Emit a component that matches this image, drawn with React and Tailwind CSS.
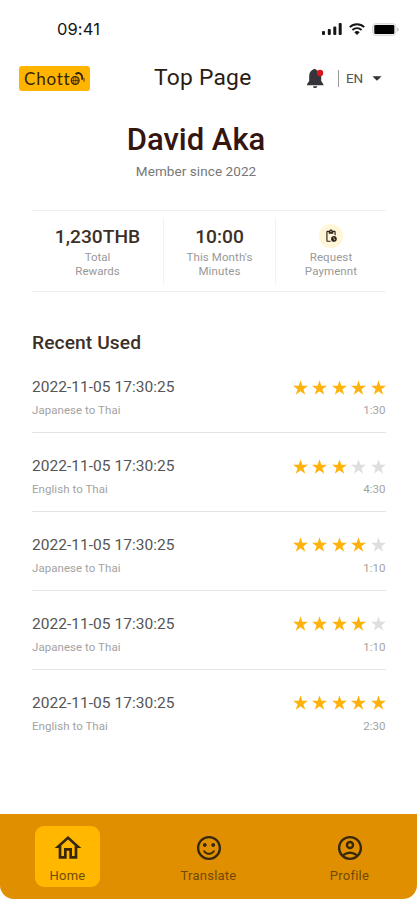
import React from "react";
import {
  MdOutlineHome,
  MdSentimentSatisfiedAlt,
  MdOutlineAccountCircle,
  MdOutlinePendingActions,
  MdArrowDropDown,
} from "react-icons/md";

const HISTORY = [
  { date: "2022-11-05 17:30:25", lang: "Japanese to Thai", stars: 5, time: "1:30" },
  { date: "2022-11-05 17:30:25", lang: "English to Thai", stars: 3, time: "4:30" },
  { date: "2022-11-05 17:30:25", lang: "Japanese to Thai", stars: 4, time: "1:10" },
  { date: "2022-11-05 17:30:25", lang: "Japanese to Thai", stars: 4, time: "1:10" },
  { date: "2022-11-05 17:30:25", lang: "English to Thai", stars: 5, time: "2:30" },
];

function StatusBar() {
  return (
    <div className="flex h-[58px] items-center pl-[57px] pr-[18px] text-[#161616]">
      <span className="font-['Inter',sans-serif] text-[16.5px] font-normal leading-5 tracking-[0.1px]">09:41</span>
      <div className="ml-auto flex items-center gap-[7px]">
        <svg className="h-3 w-5" viewBox="0 0 20 12" fill="currentColor" aria-hidden>
          <rect x="0" y="8" width="3" height="4" rx="1" />
          <rect x="5.8" y="6" width="3" height="6" rx="1" />
          <rect x="11.3" y="3.5" width="3" height="8.5" rx="1" />
          <rect x="16.7" y="0" width="3" height="12" rx="1" />
        </svg>
        <svg className="h-3 w-4" viewBox="0 0 16 12" fill="none" stroke="currentColor" aria-hidden>
          <path d="M.8 4.1a10.3 10.3 0 0114.4 0" strokeWidth="2" />
          <path d="M3.4 7a6.6 6.6 0 019.2 0" strokeWidth="1.8" />
          <path d="M8 12L5.3 9.3a3.9 3.9 0 015.4 0z" fill="currentColor" stroke="none" />
        </svg>
        <svg className="h-[13px] w-[27px]" viewBox="0 0 27 13" aria-hidden>
          <rect x=".5" y=".5" width="23.5" height="12" rx="3.5" fill="#eee" stroke="#dcdcdc" />
          <rect x="2.3" y="2.1" width="20" height="8.8" rx="1.2" fill="#000" />
          <path d="M25.2 4.5v4c1-.4 1.4-1.1 1.4-2s-.4-1.6-1.4-2z" fill="#bbb" />
        </svg>
      </div>
    </div>
  );
}

function Logo() {
  return (
    <div className="flex h-[25px] w-[71px] items-center rounded-[3px] bg-[#ffb500] pl-[5px] text-[#33240a]">
      <span className="font-['Lato',sans-serif] text-[17px] leading-none tracking-[0.8px]">Chott</span>
      <svg className="-ml-px h-[15px] w-4 shrink-0" viewBox="0 0 16 15" fill="none" stroke="currentColor" aria-hidden>
        <circle cx="5.2" cy="9.5" r="3.9" strokeWidth="1.2" />
        <path d="M5.2 5.6v7.8M1.4 9.5H9M3.3 6.4v6.2M7.1 6.4v6.2" strokeWidth=".7" />
        <path d="M5.6 3.2c1.9-1.5 4-1.4 5.4.2 1.2 1.4 1.4 3.2 1 5.2" strokeWidth="1.9" />
        <path d="M14 6.8v3.9" strokeWidth=".9" />
      </svg>
    </div>
  );
}

function Header() {
  return (
    <header className="grid h-10 grid-cols-[135px_1fr_134px] items-center pl-[19px] pr-[29px]">
      <Logo />
      <h1 className="whitespace-nowrap text-[22.8px] font-normal leading-7 tracking-[0.25px] text-[#2b1c12]">Top Page</h1>
      <div className="flex items-center justify-end">
        <svg className="h-[21px] w-[19px]" viewBox="0 0 19 21" aria-hidden>
          <path
            d="M9 .8C5.4 1.8 3.2 4.2 3.2 7.7v5.4L1 16.3v.9h16.4v-.9l-2.2-3.2V6L9 .8zM7 18.2h4.3c-.3 1.2-1.1 1.9-2.2 1.9s-1.9-.7-2.1-1.9z"
            fill="#34343a"
          />
          <circle cx="14" cy="5" r="3.2" fill="#d9151d" />
        </svg>
        <div className="ml-[13px] h-[17px] w-px bg-[#999]" />
        <span className="ml-[7px] text-[13.5px] leading-4 tracking-[-0.2px] text-[#555]">EN</span>
        <MdArrowDropDown className="ml-[3px] size-[22px] text-[#333]" />
      </div>
    </header>
  );
}

function Stats() {
  return (
    <section className="ml-8 mr-[31px] grid h-[82px] grid-cols-[132px_112px_110px] items-center border-y border-[#efefef] text-center">
      <div className="h-[66px] border-r border-[#f2f2f2] pt-[7px]">
        <p className="text-[19.2px] font-medium leading-6 text-[#3d2f26]">1,230THB</p>
        <p className="mt-[2px] text-[11.5px] leading-[13.5px] text-[#999]">
          Total
          <br />
          Rewards
        </p>
      </div>
      <div className="h-[66px] border-r border-[#f2f2f2] pt-[7px]">
        <p className="text-[19.2px] font-medium leading-6 text-[#3d2f26]">10:00</p>
        <p className="mt-[2px] text-[11.5px] leading-[13.5px] tracking-[0.1px] text-[#999]">
          This Month's
          <br />
          Minutes
        </p>
      </div>
      <div className="flex h-[66px] flex-col items-center pt-1.5">
        <div className="flex size-6 items-center justify-center rounded-full bg-[#fff6d8]">
          <MdOutlinePendingActions className="size-[14px] text-[#33251c]" />
        </div>
        <p className="mt-[3px] text-[11.5px] leading-[13.5px] tracking-[0.1px] text-[#999]">
          Request
          <br />
          Paymennt
        </p>
      </div>
    </section>
  );
}

function Stars({ value }) {
  return (
    <div className="flex gap-[4.4px]">
      {[1, 2, 3, 4, 5].map((n) => (
        <svg
          key={n}
          className={n <= value ? "size-[15px] text-[#ffb20c]" : "size-[15px] text-[#dedede]"}
          viewBox="2 1.5 20 20"
          fill="currentColor"
          aria-hidden
        >
          <path d="M12 1.8l2.4 7.4h7.7l-6.2 4.5 2.4 7.4-6.3-4.6-6.3 4.6 2.4-7.4-6.2-4.5h7.7z" />
        </svg>
      ))}
    </div>
  );
}

function HistoryRow({ item }) {
  return (
    <li className="h-[78.8px] border-b border-[#e4e4e4] pt-[23px] last:border-transparent">
      <div className="flex h-5 items-center justify-between">
        <span className="text-[15.5px] leading-5 tracking-[0.03px] text-[#555]">{item.date}</span>
        <Stars value={item.stars} />
      </div>
      <div className="mt-[5px] flex h-4 items-center justify-between text-[11.5px] leading-4 text-[#a3a3a3]">
        <span className="tracking-[0.05px]">{item.lang}</span>
        <span>{item.time}</span>
      </div>
    </li>
  );
}

function NavItem({ icon: Icon, label, active = false }) {
  return (
    <div
      className={`flex h-[61px] w-[65px] flex-col items-center rounded-[9px] pt-1.5 ${
        active ? "bg-[#ffb700]" : ""
      }`}
    >
      <Icon className={active ? "size-8 text-[#37280a]" : "size-8 p-[1.5px] text-[#37280a]"} />
      <span className="mt-1 text-[13px] leading-4 tracking-[0.25px] text-[#704b08]">{label}</span>
    </div>
  );
}

export default function App() {
  return (
    <div className="flex h-[900px] w-[417px] flex-col overflow-hidden bg-white font-['Roboto',sans-serif]">
      <StatusBar />
      <Header />
      <div className="mt-[22px] h-[90px] pr-[25px] text-center">
        <p className="text-[31px] font-medium leading-10 text-[#34150f]">David Aka</p>
        <p className="mt-px text-[13.5px] leading-5 tracking-[0.08px] text-[#777]">Member since 2022</p>
      </div>
      <Stats />
      <section className="ml-8 mr-[31.5px] mt-[39px]">
        <h2 className="text-[19.2px] font-medium leading-6 tracking-[0.1px] text-[#3d2f26]">Recent Used</h2>
        <ul className="-mt-[0.7px]">
          {HISTORY.map((item, i) => (
            <HistoryRow key={i} item={item} />
          ))}
        </ul>
      </section>
      <nav className="mb-px mt-auto flex h-[85px] items-center justify-between rounded-b-[14px] bg-[#e08f00] pl-[35px] pr-[35px]">
        <NavItem icon={MdOutlineHome} label="Home" active />
        <NavItem icon={MdSentimentSatisfiedAlt} label="Translate" />
        <NavItem icon={MdOutlineAccountCircle} label="Profile" />
      </nav>
    </div>
  );
}
